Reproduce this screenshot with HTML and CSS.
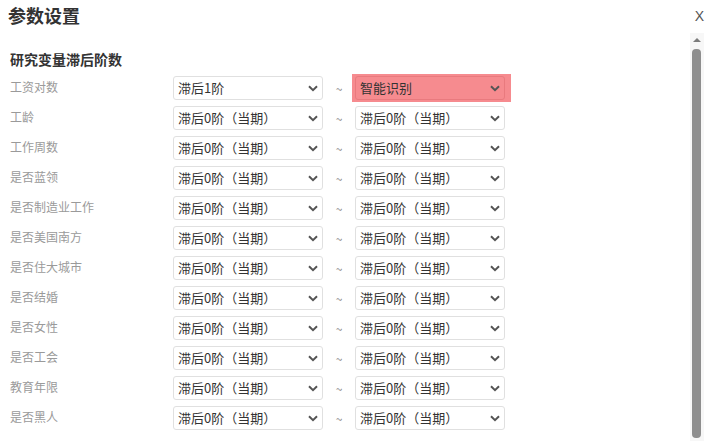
FILE: index.html
```html
<!DOCTYPE html>
<html lang="zh-CN">
<head>
<meta charset="utf-8">
<title>参数设置</title>
<link rel="stylesheet" href="styles.css">
</head>
<body>
<div class="dialog">
  <header class="head">
    <h1 class="title">参数设置</h1>
    <span class="close">X</span>
  </header>
  <div class="body">
    <h2 class="section">研究变量滞后阶数</h2>
    <div class="rows">
      <div class="row">
        <span class="label">工资对数</span>
        <select class="sel"><option>滞后1阶</option></select>
        <span class="tilde">~</span>
        <span class="hl"><select class="sel sel-hl"><option>智能识别</option></select></span>
      </div>
      <div class="row">
        <span class="label">工龄</span>
        <select class="sel"><option>滞后0阶（当期）</option></select>
        <span class="tilde">~</span>
        <select class="sel"><option>滞后0阶（当期）</option></select>
      </div>
      <div class="row">
        <span class="label">工作周数</span>
        <select class="sel"><option>滞后0阶（当期）</option></select>
        <span class="tilde">~</span>
        <select class="sel"><option>滞后0阶（当期）</option></select>
      </div>
      <div class="row">
        <span class="label">是否蓝领</span>
        <select class="sel"><option>滞后0阶（当期）</option></select>
        <span class="tilde">~</span>
        <select class="sel"><option>滞后0阶（当期）</option></select>
      </div>
      <div class="row">
        <span class="label">是否制造业工作</span>
        <select class="sel"><option>滞后0阶（当期）</option></select>
        <span class="tilde">~</span>
        <select class="sel"><option>滞后0阶（当期）</option></select>
      </div>
      <div class="row">
        <span class="label">是否美国南方</span>
        <select class="sel"><option>滞后0阶（当期）</option></select>
        <span class="tilde">~</span>
        <select class="sel"><option>滞后0阶（当期）</option></select>
      </div>
      <div class="row">
        <span class="label">是否住大城市</span>
        <select class="sel"><option>滞后0阶（当期）</option></select>
        <span class="tilde">~</span>
        <select class="sel"><option>滞后0阶（当期）</option></select>
      </div>
      <div class="row">
        <span class="label">是否结婚</span>
        <select class="sel"><option>滞后0阶（当期）</option></select>
        <span class="tilde">~</span>
        <select class="sel"><option>滞后0阶（当期）</option></select>
      </div>
      <div class="row">
        <span class="label">是否女性</span>
        <select class="sel"><option>滞后0阶（当期）</option></select>
        <span class="tilde">~</span>
        <select class="sel"><option>滞后0阶（当期）</option></select>
      </div>
      <div class="row">
        <span class="label">是否工会</span>
        <select class="sel"><option>滞后0阶（当期）</option></select>
        <span class="tilde">~</span>
        <select class="sel"><option>滞后0阶（当期）</option></select>
      </div>
      <div class="row">
        <span class="label">教育年限</span>
        <select class="sel"><option>滞后0阶（当期）</option></select>
        <span class="tilde">~</span>
        <select class="sel"><option>滞后0阶（当期）</option></select>
      </div>
      <div class="row">
        <span class="label">是否黑人</span>
        <select class="sel"><option>滞后0阶（当期）</option></select>
        <span class="tilde">~</span>
        <select class="sel"><option>滞后0阶（当期）</option></select>
      </div>
    </div>
  </div>
  <div class="scrollbar">
    <span class="arrow"></span>
    <span class="thumb"></span>
  </div>
</div>
</body>
</html>
```
FILE: styles.css
```css
html, body {
  margin: 0;
  padding: 0;
  background: #fff;
}
body {
  font-family: "Noto Sans CJK SC", "Liberation Sans", sans-serif;
  color: #333;
  overflow: hidden;
}
.dialog {
  position: relative;
  width: 709px;
  height: 441px;
  overflow: hidden;
}
.head {
  height: 33px;
  display: flex;
  align-items: center;
  justify-content: space-between;
}
.title {
  margin: -3px 0 0;
  padding-left: 8px;
  font-size: 18px;
  font-weight: bold;
  line-height: 30px;
  color: #333;
}
.close {
  font-family: "Liberation Sans", sans-serif;
  font-size: 14px;
  color: #555;
  margin-right: 5px;
  margin-top: -1px;
}
.section {
  margin: 16px 0 4px;
  padding-left: 10px;
  font-size: 14px;
  font-weight: bold;
  line-height: 20px;
  color: #333;
}
.rows {
  display: flex;
  flex-direction: column;
}
.row {
  height: 30px;
  display: flex;
  align-items: center;
  padding-left: 10px;
}
.label {
  width: 163px;
  font-size: 12px;
  color: #9a9a9a;
  margin-top: -2px;
  line-height: 20px;
}
.sel {
  appearance: none;
  -webkit-appearance: none;
  box-sizing: border-box;
  width: 150px;
  height: 24px;
  margin: 0;
  padding: 0 20px 0 4px;
  border: 1px solid #e0e0e0;
  border-radius: 3px;
  background: #fff url("data:image/svg+xml;utf8,<svg xmlns='http://www.w3.org/2000/svg' width='10' height='7' viewBox='0 0 10 7'><path d='M1 1.2 L5 5.2 L9 1.2' fill='none' stroke='%23555' stroke-width='2'/></svg>") no-repeat right 4px center;
  font-family: "Noto Sans CJK SC", "Liberation Sans", sans-serif;
  font-size: 13px;
  color: #333;
  line-height: 22px;
}
.tilde {
  width: 32px;
  text-align: center;
  font-size: 12px;
  color: #888;
}
.hl {
  display: flex;
  background: #f68b8f;
  margin: 0 -6px 0 -3px;
  padding: 2px 6px 2px 3px;
}
.sel-hl {
  background-color: #f68b8f;
  border-color: #e97a7e;
  color: #333;
}
.scrollbar {
  position: absolute;
  left: 690px;
  top: 33px;
  width: 14px;
  bottom: 0;
  background: #f7f7f7;
}
.arrow {
  position: absolute;
  left: 3px;
  top: 5px;
  width: 0;
  height: 0;
  border-left: 4px solid transparent;
  border-right: 4px solid transparent;
  border-bottom: 4px solid #7c7c7c;
}
.thumb {
  position: absolute;
  left: 2px;
  width: 9px;
  top: 16px;
  bottom: 3px;
  background: #8e8e8e;
  border-radius: 4px;
}
```
